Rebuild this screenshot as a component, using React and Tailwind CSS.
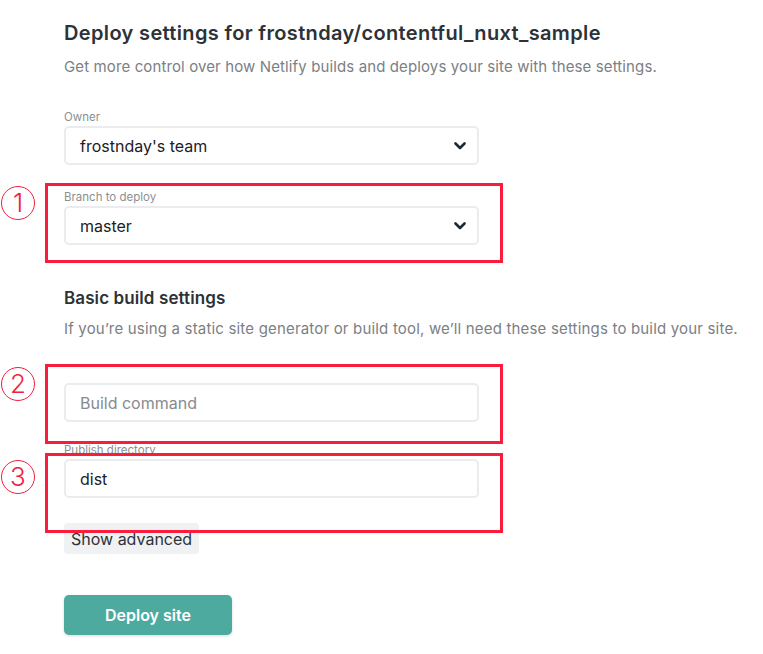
import React from 'react';

const Chevron = () => (
  <svg width="12" height="8" viewBox="0 0 12 8" className="shrink-0">
    <path d="M1.5 1.5 L6 6 L10.5 1.5" fill="none" stroke="#1f2a33" strokeWidth="2.6" strokeLinecap="round" strokeLinejoin="round" />
  </svg>
);

const Field = ({ label, value, placeholder, select }) => (
  <div className="flex flex-col gap-[2px]">
    {label && <span className="text-[11.5px] leading-[14px] text-[#8b9094]">{label}</span>}
    <div className="w-[415px] h-[39px] border-2 border-[#ebeced] rounded-[5px] bg-white flex items-center justify-between pl-[14px] pr-[11px] text-[16px]">
      {value ? <span className="text-[#1c2126]">{value}</span> : <span className="text-[#868b8f]">{placeholder}</span>}
      {select && <Chevron />}
    </div>
  </div>
);

const Mark = ({ n, top }) => (
  <div
    className="absolute left-[1px] w-[34px] h-[34px] rounded-full border border-[#f2203e] flex items-center justify-center text-[26px] font-light text-[#f2203e] leading-none"
    style={{ top }}
  >
    {n}
  </div>
);

const RedBox = ({ top }) => (
  <div className="absolute left-[45px] w-[458px] h-[80px] border-[3px] border-[#fa1c3c]" style={{ top }} />
);

export default function App() {
  return (
    <div className="relative w-[763px] h-[654px] bg-white overflow-hidden" style={{ fontFamily: 'Inter, "Noto Sans", sans-serif' }}>
      <div className="pl-[64px] pt-[19px] flex flex-col items-start">
        <div className="flex flex-col gap-[9px]">
          <h1 className="text-[20px] leading-[28px] font-semibold text-[#2c3237] tracking-[0.35px]">
            Deploy settings for frostnday/contentful_nuxt_sample
          </h1>
          <p className="text-[15px] leading-[22px] text-[#7b8084] tracking-[0.12px]">
            Get more control over how Netlify builds and deploys your site with these settings.
          </p>
        </div>

        <div className="mt-[32px] flex flex-col gap-[25px]">
          <Field label="Owner" value="frostnday's team" select />
          <Field label="Branch to deploy" value="master" select />
        </div>

        <div className="mt-[41px] flex flex-col gap-[8px]">
          <h2 className="text-[17px] leading-[24px] font-semibold text-[#2c3237] tracking-[0.1px]">Basic build settings</h2>
          <p className="text-[15px] leading-[22px] text-[#7b8084] tracking-[0.18px]">
            If you’re using a static site generator or build tool, we’ll need these settings to build your site.
          </p>
        </div>

        <div className="mt-[43px] flex flex-col gap-[21px]">
          <Field placeholder="Build command" />
          <Field label="Publish directory" value="dist" />
        </div>

        <button className="mt-[25px] h-[31px] px-[7px] rounded-[4px] bg-[#f0f1f3] text-[16px] text-[#2c3237] flex items-center">
          Show advanced
        </button>

        <button className="mt-[41px] w-[168px] h-[40px] rounded-[5px] bg-[#4daa9f] text-white text-[16px] font-semibold shadow-[0_1px_3px_rgba(0,0,0,0.15)] flex items-center justify-center">
          Deploy site
        </button>
      </div>

      <RedBox top={183} />
      <RedBox top={364} />
      <RedBox top={453} />
      <Mark n="1" top={186} />
      <Mark n="2" top={367} />
      <Mark n="3" top={460} />
    </div>
  );
}
